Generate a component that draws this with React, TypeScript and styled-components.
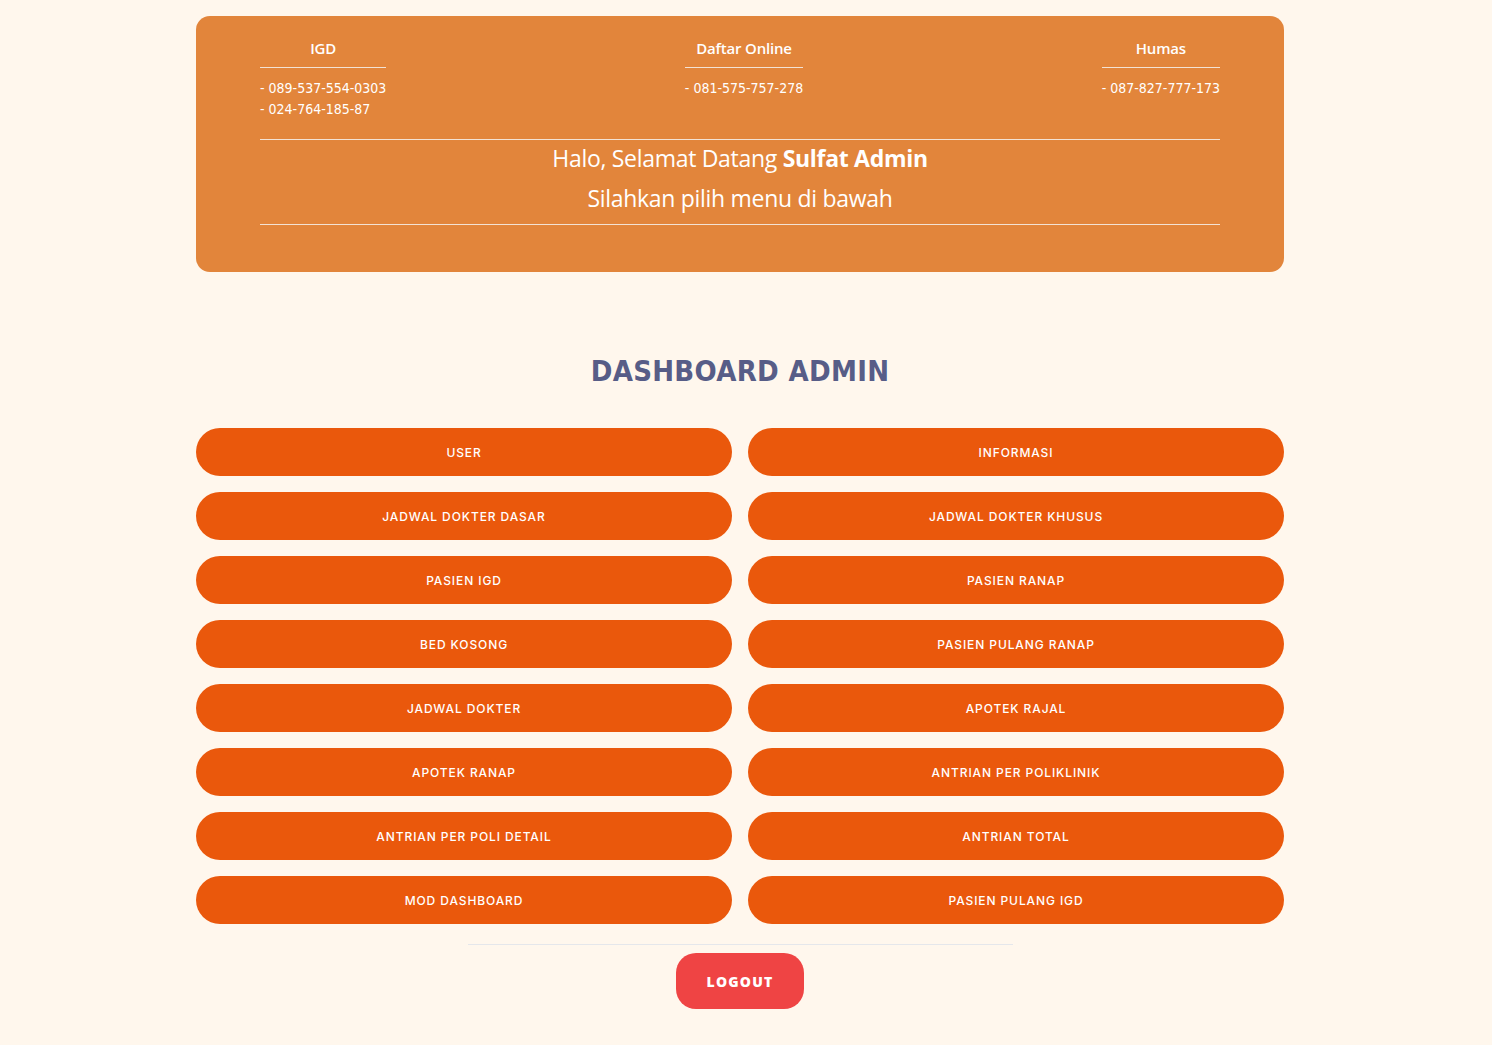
import styled, { createGlobalStyle } from 'styled-components'

const contacts = [
    { title: 'IGD', phones: ['089-537-554-0303', '024-764-185-87'] },
    { title: 'Daftar Online', phones: ['081-575-757-278'] },
    { title: 'Humas', phones: ['087-827-777-173'] },
]

const menus = [
    'USER', 'INFORMASI',
    'JADWAL DOKTER DASAR', 'JADWAL DOKTER KHUSUS',
    'PASIEN IGD', 'PASIEN RANAP',
    'BED KOSONG', 'PASIEN PULANG RANAP',
    'JADWAL DOKTER', 'APOTEK RAJAL',
    'APOTEK RANAP', 'ANTRIAN PER POLIKLINIK',
    'ANTRIAN PER POLI DETAIL', 'ANTRIAN TOTAL',
    'MOD DASHBOARD', 'PASIEN PULANG IGD',
]

export default () => {
    return (
        <>
            <GlobalStyle />
            <Page>
                <InfoCard>
                    <ContactRow>
                        {contacts.map((c) => (
                            <ContactCol key={c.title}>
                                <ContactTitle>{c.title}</ContactTitle>
                                <ContactList>
                                    {c.phones.map((p) => (
                                        <li key={p}>- {p}</li>
                                    ))}
                                </ContactList>
                            </ContactCol>
                        ))}
                    </ContactRow>
                    <Welcome>
                        <p>Halo, Selamat Datang <b>Sulfat Admin</b></p>
                        <p>Silahkan pilih menu di bawah</p>
                    </Welcome>
                </InfoCard>

                <Title>DASHBOARD ADMIN</Title>

                <MenuGrid>
                    {menus.map((m) => (
                        <MenuButton key={m}>{m}</MenuButton>
                    ))}
                </MenuGrid>

                <Footer>
                    <Divider />
                    <LogoutButton>LOGOUT</LogoutButton>
                </Footer>
            </Page>
        </>
    );
}

const GlobalStyle = createGlobalStyle`
    body {
        margin: 0;
        padding-right: 12px;
        background: #FFF7ED;
        font-family: "Open Sans", "Noto Sans", sans-serif;
    }
    * {
        box-sizing: border-box;
    }
`;

const Page = styled.div`
    width: 1088px;
    margin: 0 auto;
    padding: 16px 0 36px;
`;

const InfoCard = styled.div`
    background: #E2853B;
    border-radius: 14px;
    padding: 22px 64px 47px;
    color: #fff;
`;

const ContactRow = styled.div`
    display: flex;
    flex-flow: row nowrap;
    justify-content: space-between;
    align-items: flex-start;
    padding-bottom: 19px;
    border-bottom: 1px solid #f3e2d4;
`;

const ContactCol = styled.div`
    display: flex;
    flex-flow: column nowrap;
`;

const ContactTitle = styled.h4`
    margin: 0;
    font-family: "Open Sans", sans-serif;
    font-weight: 600;
    font-size: 15px;
    line-height: 20px;
    text-align: center;
    padding-bottom: 9px;
    border-bottom: 1px solid #f3e2d4;
    letter-spacing: -0.2px;
`;

const ContactList = styled.ul`
    list-style: none;
    margin: 0;
    padding: 10px 0 0;
    font-family: "Liberation Sans Narrow", "DejaVu Sans Condensed", "Liberation Sans", sans-serif;
    font-size: 14px;
    line-height: 21px;
    white-space: nowrap;
`;

const Welcome = styled.div`
    text-align: center;
    border-bottom: 1px solid #f3e2d4;
    padding: 0 0 6px;

    p {
        margin: 0;
        font-size: 23px;
        line-height: 40px;
        letter-spacing: -0.3px;
    }
    p:first-child {
        margin-top: -2px;
    }
    b {
        font-weight: 700;
    }
`;

const Title = styled.h1`
    margin: 81px 0 39px;
    text-align: center;
    font-family: "DejaVu Sans", sans-serif;
    font-stretch: condensed;
    font-weight: 700;
    font-size: 29px;
    line-height: 36px;
    letter-spacing: 0.3px;
    color: #575D87;
`;

const MenuGrid = styled.div`
    display: grid;
    grid-template-columns: 1fr 1fr;
    gap: 16px;
`;

const MenuButton = styled.button`
    border: none;
    height: 48px;
    border-radius: 24px;
    background: #EA580C;
    color: #fff;
    font-family: "Inter", sans-serif;
    font-weight: 500;
    font-size: 12px;
    letter-spacing: 0.9px;
    cursor: pointer;
`;

const Footer = styled.div`
    display: flex;
    flex-flow: column nowrap;
    align-items: center;
    padding-top: 20px;
`;

const Divider = styled.div`
    width: 545px;
    height: 1px;
    background: #E5E7EB;
    margin-bottom: 8px;
`;

const LogoutButton = styled.button`
    border: none;
    width: 128px;
    height: 56px;
    border-radius: 20px;
    background: #EF4444;
    color: #fff;
    font-family: "Open Sans", sans-serif;
    font-weight: 800;
    font-size: 14px;
    letter-spacing: 1.2px;
    cursor: pointer;
`;
